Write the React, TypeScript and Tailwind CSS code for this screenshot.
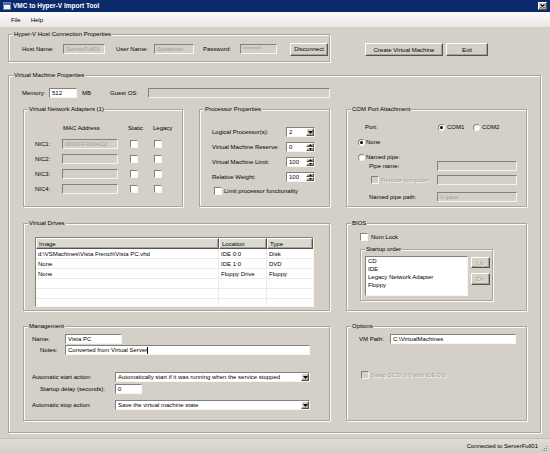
import React from "react";

const sunken =
  "border border-t-[#84817a] border-l-[#84817a] border-b-[#f6f5f2] border-r-[#f6f5f2]";
const raised =
  "border border-t-white border-l-white border-b-[#55534e] border-r-[#55534e] shadow-[inset_-1px_-1px_0_#a6a39b]";
const grayText = "text-[#a09d95] [text-shadow:1px_1px_0_#fbfaf8]";

interface GroupProps {
  title: string;
  className?: string;
  children?: React.ReactNode;
}

const Group: React.FC<GroupProps> = ({ title, className = "", children }) => (
  <div
    className={`relative shrink-0 border border-[#a9a59d] shadow-[inset_1px_1px_0_#fbfaf8,1px_1px_0_#fbfaf8] ${className}`}
  >
    <span className="absolute left-[4px] top-[-4px] bg-[#d4d0c8] px-[1px] leading-[7px] whitespace-nowrap">
      {title}
    </span>
    {children}
  </div>
);

interface TextBoxProps {
  value?: string;
  disabled?: boolean;
  caret?: boolean;
  className?: string;
}

const TextBox: React.FC<TextBoxProps> = ({
  value = "",
  disabled = false,
  caret = false,
  className = "",
}) => (
  <div
    className={`h-[10px] shrink-0 ${sunken} ${
      disabled ? "bg-[#d4d0c8] text-[#a09d95]" : "bg-white"
    } flex items-center pl-[2px] overflow-hidden whitespace-nowrap ${className}`}
  >
    {value}
    {caret && <span className="inline-block w-px h-[7px] bg-black" />}
  </div>
);

const Arrow = ({ up = false }: { up?: boolean }) => (
  <svg width="5" height="3" viewBox="0 0 5 3">
    <path d={up ? "M0 3h5L2.5 0z" : "M0 0h5L2.5 3z"} fill="#000" />
  </svg>
);

const Select: React.FC<{ value: string; className?: string }> = ({
  value,
  className = "",
}) => (
  <div className={`h-[10px] shrink-0 ${sunken} bg-white flex items-center ${className}`}>
    <span className="flex-1 pl-[2px] whitespace-nowrap overflow-hidden">{value}</span>
    <span
      className={`w-[8px] h-[8px] ${raised} bg-[#d4d0c8] flex items-center justify-center`}
    >
      <Arrow />
    </span>
  </div>
);

const Spin: React.FC<{ value: string }> = ({ value }) => (
  <div className={`h-[10px] w-[29px] shrink-0 ${sunken} bg-white flex items-center`}>
    <span className="flex-1 pl-[2px]">{value}</span>
    <span className="w-[8px] h-[8px] flex flex-col">
      <span className={`h-[4px] ${raised} bg-[#d4d0c8] flex items-center justify-center`}>
        <svg width="3" height="2" viewBox="0 0 3 2">
          <path d="M0 2h3L1.5 0z" fill="#000" />
        </svg>
      </span>
      <span className={`h-[4px] ${raised} bg-[#d4d0c8] flex items-center justify-center`}>
        <svg width="3" height="2" viewBox="0 0 3 2">
          <path d="M0 0h3L1.5 2z" fill="#000" />
        </svg>
      </span>
    </span>
  </div>
);

const CheckBox: React.FC<{ disabled?: boolean; className?: string }> = ({
  disabled = false,
  className = "",
}) => (
  <span
    className={`inline-block w-[8px] h-[8px] shrink-0 ${sunken} ${
      disabled ? "bg-[#d4d0c8]" : "bg-white"
    } ${className}`}
  />
);

const Radio: React.FC<{ checked?: boolean }> = ({ checked = false }) => (
  <span
    className={`w-[7px] h-[7px] shrink-0 rounded-full ${sunken} bg-white flex items-center justify-center`}
  >
    {checked && <span className="w-[3px] h-[3px] rounded-full bg-black" />}
  </span>
);

const Button: React.FC<{
  label: string;
  disabled?: boolean;
  className?: string;
}> = ({ label, disabled = false, className = "" }) => (
  <div
    className={`shrink-0 ${raised} bg-[#d4d0c8] flex items-center justify-center whitespace-nowrap ${
      disabled ? grayText : ""
    } ${className}`}
  >
    {label}
  </div>
);

const drives = [
  ["d:\\VSMachines\\Vista French\\Vista PC.vhd", "IDE 0:0", "Disk"],
  ["None", "IDE 1:0", "DVD"],
  ["None", "Floppy Drive", "Floppy"],
  ["", "", ""],
  ["", "", ""],
  ["", "", ""],
];

const nics = [
  { name: "NIC1:", mac: "0003FF3A04C2" },
  { name: "NIC2:", mac: "" },
  { name: "NIC3:", mac: "" },
  { name: "NIC4:", mac: "" },
];

const procRows = [
  { label: "Virtual Machine Reserve:", value: "0" },
  { label: "Virtual Machine Limit:", value: "100" },
  { label: "Relative Weight:", value: "100" },
];

export default function App() {
  return (
    <div className="w-[550px] h-[453px] overflow-hidden bg-[#d4d0c8] flex flex-col font-['Liberation_Sans',Arial,sans-serif] text-[6px] leading-none text-black">
      {/* Title bar */}
      <div className="h-[12px] shrink-0 bg-[#0b2a6c] flex items-center">
        <svg className="ml-[3px]" width="8" height="8" viewBox="0 0 8 8">
          <rect x="0.5" y="0.5" width="7" height="7" fill="#f4f4f4" stroke="#6b7fa8" />
          <rect x="1" y="1" width="6" height="2" fill="#3a6ec4" />
        </svg>
        <span className="ml-[2px] text-[6.5px] font-bold text-white whitespace-nowrap">
          VMC to Hyper-V Import Tool
        </span>
        <div
          className={`ml-auto mr-[3px] w-[9px] h-[8px] ${raised} bg-[#d4d0c8] flex items-center justify-center`}
        >
          <svg width="5" height="4" viewBox="0 0 5 4">
            <path d="M0.5 0.5l4 3M4.5 0.5l-4 3" stroke="#000" strokeWidth="1.1" />
          </svg>
        </div>
      </div>

      {/* Menu bar */}
      <div className="h-[15px] shrink-0 bg-linear-to-b from-[#fbfbfa] to-[#e9e7e2] flex items-center pl-[11px] gap-[10px]">
        <span>File</span>
        <span>Help</span>
      </div>

      {/* Connection row */}
      <div className="flex items-start shrink-0">
        <Group title="Hyper-V Host Connection Properties" className="ml-[8px] mt-[7px] w-[322px] h-[28px]">
          <div className="flex items-center h-full pl-[13px] pt-[2px]">
            <span className="w-[41px]">Host Name:</span>
            <TextBox value="ServerFull01" disabled className="w-[42px]" />
            <span className="ml-[11px] w-[38px]">User Name:</span>
            <TextBox value="Sysadmin" disabled className="w-[40px]" />
            <span className="ml-[9px] w-[37px]">Password:</span>
            <TextBox value="********" disabled className="w-[37px]" />
            <Button label="Disconnect" className="ml-[13px] w-[38px] h-[13px]" />
          </div>
        </Group>
        <Button label="Create Virtual Machine" className="ml-[35px] mt-[16px] w-[78px] h-[13px]" />
        <Button label="Exit" className="ml-[3px] mt-[16px] w-[42px] h-[13px]" />
      </div>

      {/* Virtual Machine Properties */}
      <Group title="Virtual Machine Properties" className="ml-[8px] mt-[13px] w-[533px] h-[358px]">
        <div className="mt-[12px] ml-[13px] h-[10px] flex items-center">
          <span className="w-[27px]">Memory:</span>
          <TextBox value="512" className="w-[28px]" />
          <span className="ml-[5px] w-[28px]">MB</span>
          <span className="w-[38px]">Guest OS:</span>
          <TextBox disabled className="w-[182px]" />
        </div>

        {/* Row: NIC / Processor / COM */}
        <div className="mt-[11px] ml-[14px] flex gap-[16px]">
          <Group title="Virtual Network Adapters (1)" className="w-[160px] h-[98px]">
            <div className="mt-[14px] h-[7px] pl-[11px] flex items-center">
              <span className="w-[27px]" />
              <span className="w-[56px] pl-[1px]">MAC Address</span>
              <span className="ml-[10px] w-[25px]">Static</span>
              <span>Legacy</span>
            </div>
            <div className="mt-[8px] pl-[11px] flex flex-col gap-[5px]">
              {nics.map((n) => (
                <div key={n.name} className="h-[10px] flex items-center">
                  <span className="w-[27px]">{n.name}</span>
                  <TextBox value={n.mac} disabled className="w-[56px]" />
                  <span className="ml-[10px] w-[25px] flex">
                    <CheckBox className="ml-[2px]" />
                  </span>
                  <CheckBox className="ml-[1px]" />
                </div>
              ))}
            </div>
          </Group>

          <Group title="Processor Properties" className="w-[131px] h-[98px]">
            <div className="pt-[17px] pl-[12px] flex flex-col gap-[5px]">
              <div className="h-[10px] flex items-center">
                <span className="w-[74px]">Logical Processor(s):</span>
                <Select value="2" className="w-[29px]" />
              </div>
              {procRows.map((r) => (
                <div key={r.label} className="h-[10px] flex items-center">
                  <span className="w-[74px] whitespace-nowrap">{r.label}</span>
                  <Spin value={r.value} />
                </div>
              ))}
              <div className="h-[8px] flex items-center">
                <CheckBox className="ml-[2px]" />
                <span className="ml-[2px] whitespace-nowrap">Limit processor functionality</span>
              </div>
            </div>
          </Group>

          <Group title="COM Port Attachment" className="w-[181px] h-[98px]">
            <div className="mt-[13px] h-[8px] pl-[18px] flex items-center">
              <span className="w-[73px]">Port:</span>
              <Radio checked />
              <span className="ml-[2px] w-[26px]">COM1</span>
              <Radio />
              <span className="ml-[2px]">COM2</span>
            </div>
            <div className="mt-[7px] h-[8px] pl-[11px] flex items-center gap-[1px]">
              <Radio checked />
              <span>None</span>
            </div>
            <div className="mt-[7px] h-[8px] pl-[11px] flex items-center gap-[1px]">
              <Radio />
              <span>Named pipe:</span>
            </div>
            <div className="h-[10px] pl-[22px] flex items-center">
              <span className="w-[68px]">Pipe name:</span>
              <TextBox disabled className="w-[80px]" />
            </div>
            <div className="mt-[4px] h-[10px] pl-[22px] flex items-center">
              <span className="w-[68px] flex items-center">
                <CheckBox disabled className="ml-[2px]" />
                <span className={`ml-[2px] whitespace-nowrap ${grayText}`}>Remote computer:</span>
              </span>
              <TextBox disabled className="w-[80px]" />
            </div>
            <div className="mt-[7px] h-[10px] pl-[22px] flex items-center">
              <span className="w-[68px]">Named pipe path:</span>
              <TextBox value="\\.\pipe" disabled className="w-[80px]" />
            </div>
          </Group>
        </div>

        {/* Row: Drives / BIOS */}
        <div className="mt-[16px] ml-[14px] flex gap-[16px]">
          <Group title="Virtual Drives" className="w-[307px] h-[88px]">
            <div className={`ml-[11px] mt-[13px] w-[279px] h-[70px] ${sunken} bg-white overflow-hidden`}>
              <div className="h-[11px] flex">
                <span className={`w-[183px] ${raised} bg-[#dcd9d2] pl-[2px] flex items-center`}>Image</span>
                <span className={`w-[48px] ${raised} bg-[#dcd9d2] pl-[2px] flex items-center`}>Location</span>
                <span className={`flex-1 ${raised} bg-[#dcd9d2] pl-[2px] flex items-center`}>Type</span>
              </div>
              {drives.map((d, i) => (
                <div key={i} className="h-[10px] flex border-b border-[#ebebeb]">
                  <span className="w-[183px] border-r border-[#ebebeb] pl-[2px] flex items-center whitespace-nowrap">{d[0]}</span>
                  <span className="w-[48px] border-r border-[#ebebeb] pl-[2px] flex items-center whitespace-nowrap">{d[1]}</span>
                  <span className="flex-1 pl-[2px] flex items-center">{d[2]}</span>
                </div>
              ))}
            </div>
          </Group>

          <Group title="BIOS" className="w-[181px] h-[88px]">
            <div className="mt-[9px] ml-[13px] h-[8px] flex items-center">
              <CheckBox />
              <span className="ml-[3px]">Num Lock</span>
            </div>
            <Group title="Startup order" className="mt-[8px] ml-[13px] w-[133px] h-[52px]">
              <div className="mt-[6px] ml-[4px] flex items-start">
                <div className={`w-[103px] h-[40px] ${sunken} bg-white pl-[2px] flex flex-col`}>
                  {["CD", "IDE", "Legacy Network Adapter", "Floppy"].map((s) => (
                    <span key={s} className="h-[8px] flex items-center whitespace-nowrap">
                      {s}
                    </span>
                  ))}
                </div>
                <div className="ml-[3px] mt-[1px] flex flex-col gap-[5px]">
                  <Button label="Up" disabled className="w-[19px] h-[11px]" />
                  <Button label="Dn" disabled className="w-[19px] h-[12px]" />
                </div>
              </div>
            </Group>
          </Group>
        </div>

        {/* Row: Management / Options */}
        <div className="mt-[15px] ml-[14px] flex gap-[16px]">
          <Group title="Management" className="w-[307px] h-[95px]">
            <div className="mt-[7px] pl-[8px] h-[10px] flex items-center">
              <span className="w-[33px]">Name:</span>
              <TextBox value="Vista PC" className="w-[57px]" />
            </div>
            <div className="mt-[1px] pl-[8px] h-[10px] flex items-center">
              <span className="w-[33px] pl-[8px]">Notes:</span>
              <TextBox value="Converted from Virtual Server" caret className="w-[245px]" />
            </div>
            <div className="mt-[17px] pl-[8px] h-[10px] flex items-center">
              <span className="w-[83px]">Automatic start action:</span>
              <Select
                value="Automatically start if it was running when the service stopped"
                className="w-[195px]"
              />
            </div>
            <div className="mt-[2px] pl-[8px] h-[10px] flex items-center">
              <span className="w-[83px] pl-[8px] whitespace-nowrap">Startup delay (seconds):</span>
              <TextBox value="0" className="w-[27px]" />
            </div>
            <div className="mt-[6px] pl-[8px] h-[10px] flex items-center">
              <span className="w-[83px]">Automatic stop action:</span>
              <Select value="Save the virtual machine state" className="w-[195px]" />
            </div>
          </Group>

          <Group title="Options" className="w-[181px] h-[95px]">
            <div className="mt-[7px] pl-[12px] h-[10px] flex items-center">
              <span className="w-[31px]">VM Path:</span>
              <TextBox value="C:\VirtualMachines" className="w-[126px]" />
            </div>
            <div className="mt-[27px] pl-[14px] h-[8px] flex items-center">
              <CheckBox disabled />
              <span className={`ml-[2px] ${grayText}`}>Swap SCSI 0:0 with IDE 0:0</span>
            </div>
          </Group>
        </div>
      </Group>

      {/* Status bar */}
      <div className="mt-auto h-[15px] shrink-0 border-t border-[#c2beb6] bg-linear-to-b from-[#e0ddd7] to-[#d4d0c8] flex items-center justify-end pr-[2px]">
        <span>Connected to ServerFull01</span>
        <svg className="ml-[3px] mt-[5px]" width="7" height="7" viewBox="0 0 7 7">
          <rect x="5" y="1" width="1" height="1" fill="#8a877f" />
          <rect x="3" y="3" width="1" height="1" fill="#8a877f" />
          <rect x="5" y="3" width="1" height="1" fill="#8a877f" />
          <rect x="1" y="5" width="1" height="1" fill="#8a877f" />
          <rect x="3" y="5" width="1" height="1" fill="#8a877f" />
          <rect x="5" y="5" width="1" height="1" fill="#8a877f" />
        </svg>
      </div>
    </div>
  );
}
